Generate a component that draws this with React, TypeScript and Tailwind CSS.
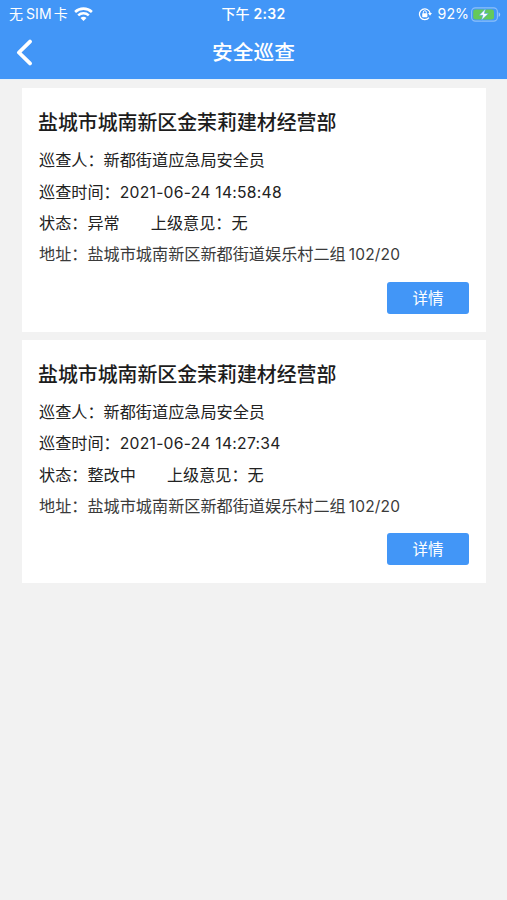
import React from 'react';

interface Inspection {
    id: number;
    company: string;
    inspector: string;
    time: string;
    status: string;
    opinion: string;
    address: string;
    houseNo: string;
}

const inspections: Inspection[] = [
    {
        id: 1,
        company: '盐城市城南新区金茉莉建材经营部',
        inspector: '新都街道应急局安全员',
        time: '2021-06-24 14:58:48',
        status: '异常',
        opinion: '无',
        address: '盐城市城南新区新都街道娱乐村二组',
        houseNo: '102/20',
    },
    {
        id: 2,
        company: '盐城市城南新区金茉莉建材经营部',
        inspector: '新都街道应急局安全员',
        time: '2021-06-24 14:27:34',
        status: '整改中',
        opinion: '无',
        address: '盐城市城南新区新都街道娱乐村二组',
        houseNo: '102/20',
    },
];

const IconWifi = () => (
    <svg width="19" height="14" viewBox="0 0 19 14" fill="none" stroke="white" strokeWidth="2.6">
        <path d="M1.1 5C5.8 0.5 13.2 0.5 17.9 5" />
        <path d="M4.2 8.4C7.2 5.6 11.8 5.6 14.8 8.4" />
        <path d="M9.5 13.9L6.5 10.9C8.2 9.4 10.8 9.4 12.5 10.9Z" fill="white" stroke="none" />
    </svg>
);

const IconRotationLock = () => (
    <svg width="14" height="14" viewBox="0 0 14 14" fill="none" stroke="white" strokeWidth="1.3">
        <path d="M11 10.7A5.4 5.4 0 1 1 12.1 6.2" />
        <path d="M10 5.9H14L12 8.8Z" fill="white" stroke="none" />
        <rect x="4.2" y="6.2" width="5.2" height="4" rx="0.6" fill="white" stroke="none" />
        <path d="M5.3 6.6V5.2A1.5 1.5 0 0 1 8.3 5.2V6.6" strokeWidth="1" />
    </svg>
);

const IconBattery = () => (
    <svg width="30" height="15" viewBox="0 0 30 15" fill="none">
        <rect x="0.6" y="0.9" width="25.8" height="13.2" rx="3.8" stroke="white" strokeOpacity="0.4" strokeWidth="1.1" />
        <rect x="2.2" y="2.5" width="20.8" height="10" rx="2.2" fill="#65c95a" />
        <path d="M27.6 5.2C29.7 6 29.7 9 27.6 9.8Z" fill="white" fillOpacity="0.5" />
        <path d="M14.6 1.8L8.2 8.3H11.9L10.4 13.2L17.4 6.5H13.3Z" fill="white" stroke="#4296f7" strokeWidth="0.5" />
    </svg>
);

const StatusBar: React.FC = () => (
    <div className="grid h-7 grid-cols-3 items-center text-[14.5px] leading-7">
        <div className="flex items-center pl-[9px]">
            <span className="text-[14px]">无</span>
            <span className="ml-[3px] text-[14px] tracking-[0.1px]">SIM</span>
            <span className="ml-[2px] mr-[6px] text-[14px]">卡</span>
            <IconWifi />
        </div>
        <div className="flex items-center justify-center gap-1 font-medium">
            <span className="text-[14px]">下午</span>
            <span className="text-[14px] font-semibold tracking-[0.25px]">2:32</span>
        </div>
        <div className="flex items-center justify-end pr-[6px]">
            <IconRotationLock />
            <span className="ml-[6px] mr-[2px] text-[14.2px]">92%</span>
            <IconBattery />
        </div>
    </div>
);

const InspectionCard: React.FC<{ item: Inspection }> = ({ item }) => (
    <div className="h-[243.5px] bg-white px-[17px] pt-5">
        <h2 className="-ml-px text-[19.9px] font-medium leading-[31px] whitespace-nowrap text-[#1c1c1c]">{item.company}</h2>
        <div className="mt-[6.2px] text-[16.15px] leading-[31.4px] whitespace-nowrap text-[#222]">
            <p>巡查人：{item.inspector}</p>
            <p className="flex">
                <span>巡查时间：</span>
                <span className="text-[15.7px] tracking-[0.25px]">{item.time}</span>
            </p>
            <p className="flex gap-[31px]">
                <span>状态：{item.status}</span>
                <span>上级意见：{item.opinion}</span>
            </p>
            <p className="flex text-[#3a3a3a]">
                <span>地址：{item.address}</span>
                <span className="ml-[3px] text-[15.5px] tracking-[0.2px]">{item.houseNo}</span>
            </p>
        </div>
        <div className="mt-[11px] flex justify-end">
            <button type="button" className="h-8 w-[82px] rounded-[3px] bg-[#4296f7] text-[15.5px] leading-[33px] text-white">
                详情
            </button>
        </div>
    </div>
);

const App: React.FC = () => {
    return (
        <div className="min-h-screen bg-[#f2f2f2] font-['Inter','Noto_Sans_CJK_SC',sans-serif]">
            <header className="h-[79px] bg-[#4296f7] text-white">
                <StatusBar />
                <div className="grid h-[49px] grid-cols-3 items-center">
                    <button type="button" className="ml-4 w-4">
                        <svg width="17" height="27" viewBox="0 0 17 27" fill="none" stroke="white" strokeWidth="3.8" strokeLinecap="round" strokeLinejoin="round">
                            <path d="M14 2.6L2.9 13.5L14 24.4" />
                        </svg>
                    </button>
                    <h1 className="pt-px text-center text-[20.7px] font-medium">安全巡查</h1>
                </div>
            </header>
            <main className="flex flex-col gap-2 border-t border-[#e6f1fa] pt-2 pr-[21px] pl-[22px]">
                {inspections.map((item) => (
                    <InspectionCard key={item.id} item={item} />
                ))}
            </main>
        </div>
    );
};

export default App;
